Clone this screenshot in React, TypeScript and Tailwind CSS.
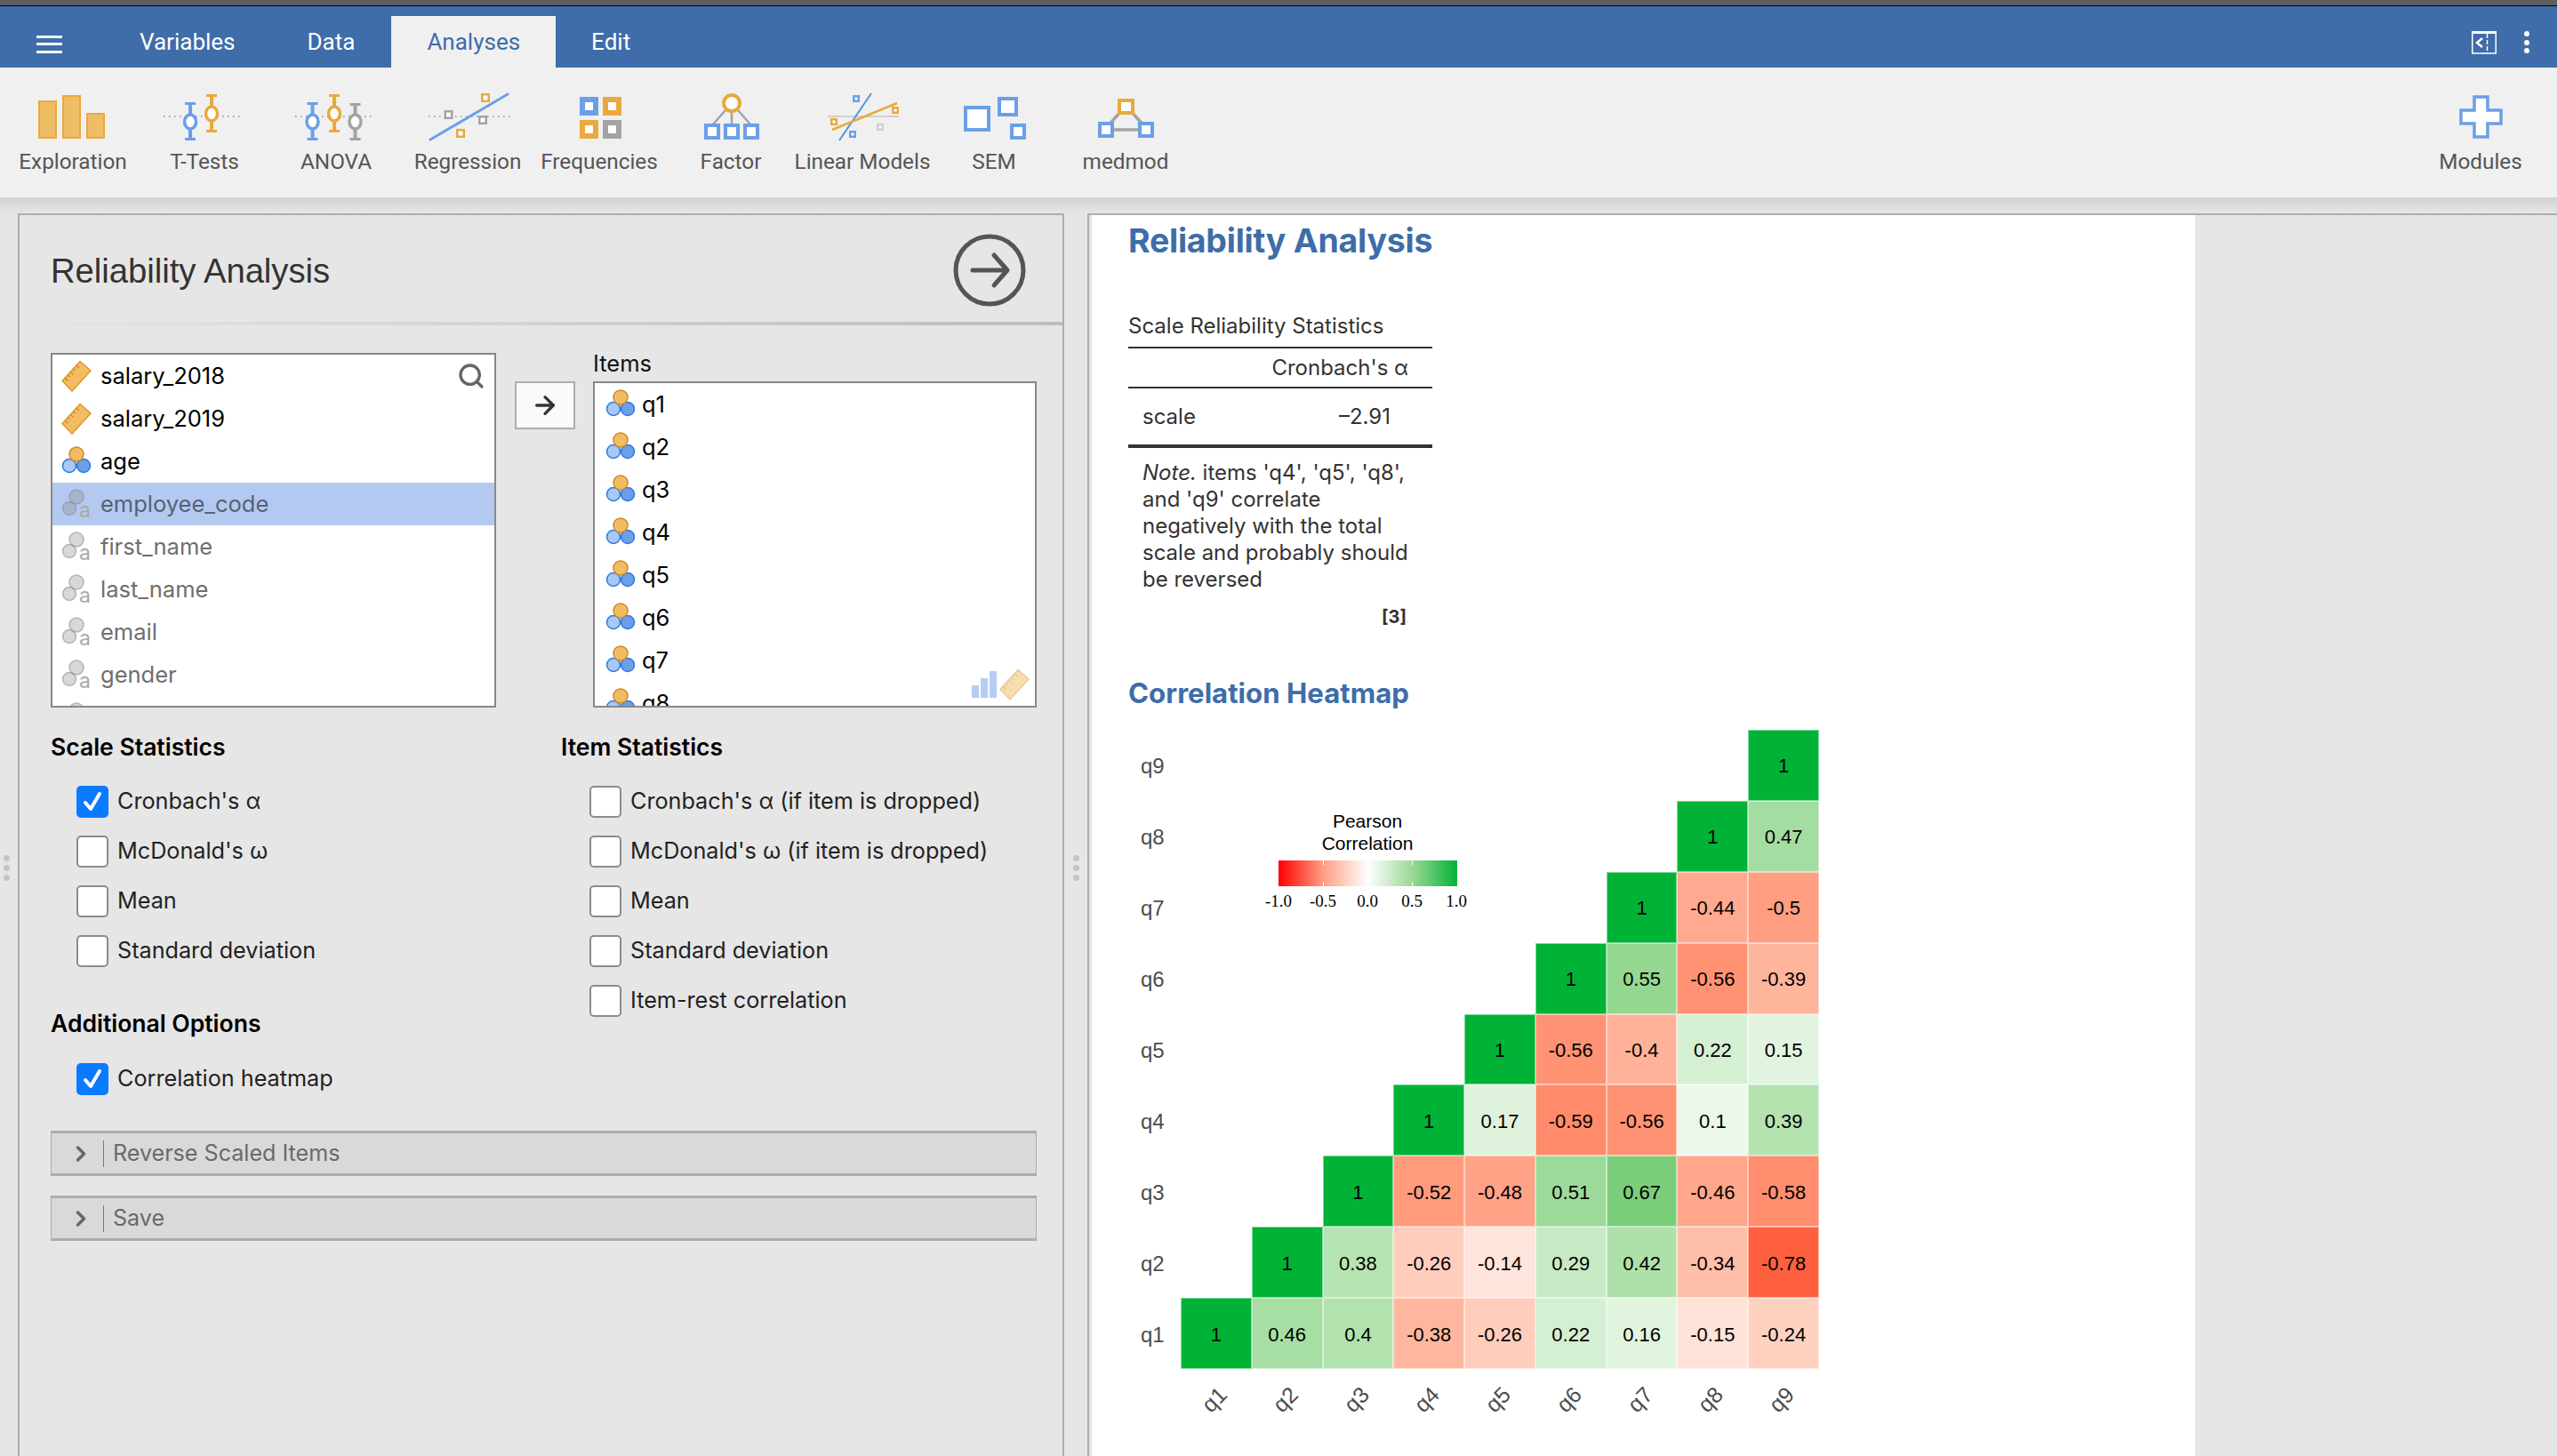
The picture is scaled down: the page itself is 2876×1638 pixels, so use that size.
import React from "react";
import { ArrowRight, ChevronRight, Search } from "lucide-react";

const BLUE = "#6b9fe8";
const ORANGE = "#e9a93f";
const GREY = "#a3a3a3";

// dotted zero line used by the t-test, anova and regression icons
const Dots = ({ x1, x2 }: { x1: number; x2: number }) => (
    <line x1={x1} x2={x2} y1={27} y2={27} stroke="#6b8fc4" strokeWidth={1.5} strokeDasharray="1.5 4.5" />
);

const ErrorBar = ({ x, top, bottom, cy, color }: { x: number; top: number; bottom: number; cy: number; color: string }) => (
    <g stroke={color} fill="none">
        <line x1={x} x2={x} y1={top} y2={bottom} strokeWidth={4} />
        <line x1={x - 6} x2={x + 6} y1={top + 1.5} y2={top + 1.5} strokeWidth={3} />
        <line x1={x - 6} x2={x + 6} y1={bottom - 1.5} y2={bottom - 1.5} strokeWidth={3} />
        <ellipse cx={x} cy={cy} rx={6.5} ry={8} fill="white" strokeWidth={3.5} />
    </g>
);

const Box = ({ x, y, w, h, color, sw = 3 }: { x: number; y: number; w: number; h: number; color: string; sw?: number }) => (
    <rect x={x + sw / 2} y={y + sw / 2} width={w - sw} height={h - sw} fill="white" stroke={color} strokeWidth={sw} />
);

const Pt = ({ cx, cy, color, s = 10 }: { cx: number; cy: number; color: string; s?: number }) => (
    <Box x={cx - s / 2} y={cy - s / 2} w={s} h={s} color={color} sw={2.5} />
);

const ribbonIcons: Record<string, React.ReactNode> = {
    Exploration: (
        <g fill="#eebd66" stroke={ORANGE} strokeWidth={2}>
            <rect x={12} y={10} width={19} height={41} />
            <rect x={39} y={4} width={19} height={47} />
            <rect x={66} y={24} width={19} height={27} />
        </g>
    ),
    "T-Tests": (
        <>
            <Dots x1={4} x2={94} />
            <ErrorBar x={34} top={11} bottom={54} cy={33} color={BLUE} />
            <ErrorBar x={58} top={2} bottom={45} cy={24} color={ORANGE} />
        </>
    ),
    ANOVA: (
        <>
            <Dots x1={4} x2={94} />
            <ErrorBar x={23.5} top={11} bottom={54} cy={33} color={BLUE} />
            <ErrorBar x={48} top={2} bottom={45} cy={24} color={ORANGE} />
            <ErrorBar x={71.5} top={12} bottom={54} cy={33} color={GREY} />
        </>
    ),
    Regression: (
        <>
            <Dots x1={6} x2={98} />
            <line x1={8} y1={53} x2={95} y2={2} stroke={BLUE} strokeWidth={3} strokeLinecap="round" />
            <Pt cx={70} cy={6} color={ORANGE} />
            <Pt cx={28.5} cy={25} color={GREY} />
            <Pt cx={67} cy={31} color={GREY} />
            <Pt cx={42} cy={46} color={ORANGE} />
        </>
    ),
    Frequencies: (
        <>
            <Box x={28} y={5} w={21} h={21} color={BLUE} sw={6} />
            <Box x={54} y={5} w={21} h={21} color={ORANGE} sw={6} />
            <Box x={28} y={31} w={21} h={21} color={ORANGE} sw={6} />
            <Box x={54} y={31} w={21} h={21} color={GREY} sw={6} />
        </>
    ),
    Factor: (
        <>
            <g stroke={GREY} strokeWidth={2.5}>
                <line x1={51} y1={12} x2={29} y2={37} />
                <line x1={51} y1={12} x2={51} y2={37} />
                <line x1={51} y1={12} x2={73} y2={37} />
            </g>
            <ellipse cx={51} cy={12} rx={9} ry={9} fill="white" stroke={ORANGE} strokeWidth={4} />
            <Box x={20} y={35} w={18} h={18} color={BLUE} sw={4} />
            <Box x={42} y={35} w={18} h={18} color={BLUE} sw={4} />
            <Box x={64} y={35} w={18} h={18} color={BLUE} sw={4} />
        </>
    ),
    "Linear Models": (
        <>
            <line x1={11} x2={91} y1={27} y2={27} stroke="#cfcfcf" strokeWidth={2} />
            <line x1={60} y1={1} x2={24} y2={54} stroke="#4f94e0" strokeWidth={2} />
            <line x1={89} y1={12} x2={16} y2={42} stroke={ORANGE} strokeWidth={2.5} />
            <Pt cx={43} cy={7} color={BLUE} s={8} />
            <Pt cx={87} cy={20} color={ORANGE} s={8} />
            <Pt cx={18} cy={33} color={ORANGE} s={8} />
            <Pt cx={70} cy={39} color="#cfcfcf" s={8} />
            <Pt cx={39} cy={47} color={BLUE} s={8} />
        </>
    ),
    SEM: (
        <>
            <Box x={16} y={15} w={30} h={29} color={BLUE} sw={4} />
            <Box x={54} y={5} w={23} h={22} color={BLUE} sw={4} />
            <Box x={68} y={35} w={18} h={18} color={BLUE} sw={4} />
        </>
    ),
    medmod: (
        <>
            <g stroke={GREY} strokeWidth={3.5}>
                <line x1={46} y1={20} x2={28} y2={40} />
                <line x1={55} y1={20} x2={73} y2={40} />
                <line x1={30} y1={42} x2={70} y2={42} />
            </g>
            <Box x={41} y={7} w={19} h={18} color={ORANGE} sw={4} />
            <Box x={19} y={33} w={18} h={18} color={BLUE} sw={4} />
            <Box x={64} y={33} w={18} h={18} color={BLUE} sw={4} />
        </>
    ),
    Modules: (
        <path d="M43.5 6h15v15h15v15h-15v15h-15v-15h-15v-15h15z" fill="white" stroke={BLUE} strokeWidth={3.5} transform="translate(-0.5 -1)" />
    ),
};

const RibbonButton = ({ label }: { label: string }) => (
    <div className="w-[148px] flex flex-col items-center">
        <svg width="100" height="60" viewBox="0 0 100 60" className="mt-7">
            {ribbonIcons[label]}
        </svg>
        <span className="mt-[4px] text-[24.3px] leading-[28px] text-[#555] font-['Roboto',sans-serif] whitespace-nowrap">{label}</span>
    </div>
);

const RulerIcon = ({ faded }: { faded?: boolean }) => (
    <svg width="34" height="36" viewBox="0 0 34 36" className={faded ? "opacity-50 shrink-0" : "shrink-0"}>
        <path d="M21 1.5 33 12 12 35 1 23.5z" fill="#f2bd62" stroke="#e0962a" strokeWidth="1.5" strokeLinejoin="round" />
        <path d="M17 6l3 3M13.5 10l2 2M10.5 13.5l3 3M7.5 17l2 2M4.5 20.5l3 3" stroke="#c98a25" strokeWidth="1.2" />
    </svg>
);

const NominalIcon = () => (
    <svg width="34" height="36" viewBox="0 0 34 36" className="shrink-0">
        <circle cx="9" cy="23" r="7.5" fill="#a9c8f5" stroke="#2f78dc" strokeWidth="1.5" />
        <circle cx="25" cy="23" r="7.5" fill="#6b9fe8" stroke="#2f78dc" strokeWidth="1.5" />
        <circle cx="17" cy="10" r="8" fill="#f2bd62" stroke="#c98a25" strokeWidth="1.5" />
    </svg>
);

const IdIcon = () => (
    <svg width="34" height="36" viewBox="0 0 34 36" className="shrink-0">
        <circle cx="9" cy="23" r="7.5" fill="#8f8f8f" fillOpacity="0.35" stroke="#8f8f8f" strokeOpacity="0.6" strokeWidth="1.5" />
        <circle cx="17" cy="10" r="8" fill="#8f8f8f" fillOpacity="0.35" stroke="#8f8f8f" strokeOpacity="0.6" strokeWidth="1.5" />
        <text x="20" y="33" fontSize="23" fill="#a8a8a8" fontFamily="Inter, sans-serif">a</text>
    </svg>
);

const VarRow = ({ icon, label, muted, selected }: { icon: React.ReactNode; label: string; muted?: boolean; selected?: boolean }) => (
    <div className={`h-12 shrink-0 flex items-center gap-[10px] pl-[10px] text-[25.5px] ${selected ? "bg-[#b3c9ef] text-[#566278]" : muted ? "text-[#6e6e6e]" : "text-black"}`}>
        {icon}
        <span>{label}</span>
    </div>
);

const Check = ({ label, checked }: { label: string; checked?: boolean }) => (
    <div className="h-14 flex items-center gap-[10px]">
        <div className={`w-9 h-9 rounded-[5px] flex items-center justify-center ${checked ? "bg-[#0a7aff]" : "bg-white border-2 border-[#8c8c8c]"}`}>
            {checked && (
                <svg width="28" height="28" viewBox="0 0 28 28" fill="none">
                    <path d="M6 15l6 7L22 5" stroke="white" strokeWidth="4" strokeLinecap="round" strokeLinejoin="round" />
                </svg>
            )}
        </div>
        <span className="text-[25.2px] text-[#222]">{label}</span>
    </div>
);

const Collapsed = ({ label }: { label: string }) => (
    <div className="h-[51px] flex items-center bg-[#d9d9d9] border-y-[3px] border-x border-[#acacac]">
        <ChevronRight className="w-7 h-7 ml-[19px] text-[#666]" strokeWidth={3} />
        <div className="w-px h-[30px] bg-[#777] ml-[11px]" />
        <span className="ml-[10px] text-[25.1px] text-[#6a6a6a]">{label}</span>
    </div>
);

const Handle = () => (
    <div className="flex flex-col gap-[4px] items-center mt-[722px]">
        <div className="w-[7px] h-[7px] rounded-full bg-[#c4c4c4]" />
        <div className="w-[7px] h-[7px] rounded-full bg-[#c4c4c4]" />
        <div className="w-[7px] h-[7px] rounded-full bg-[#c4c4c4]" />
    </div>
);

// ggplot style gradient2: interpolate in Lab between white and the end colour
const toLab = ([r, g, b]: number[]) => {
    const f = (c: number) => {
        const v = c / 255;
        return v > 0.04045 ? Math.pow((v + 0.055) / 1.055, 2.4) : v / 12.92;
    };
    const [lr, lg, lb] = [f(r), f(g), f(b)];
    const x = (0.4124 * lr + 0.3576 * lg + 0.1805 * lb) / 0.95047;
    const y = 0.2126 * lr + 0.7152 * lg + 0.0722 * lb;
    const z = (0.0193 * lr + 0.1192 * lg + 0.9505 * lb) / 1.08883;
    const h = (t: number) => (t > 0.008856 ? Math.cbrt(t) : 7.787 * t + 16 / 116);
    return [116 * h(y) - 16, 500 * (h(x) - h(y)), 200 * (h(y) - h(z))];
};

const fromLab = ([l, a, b]: number[]) => {
    const fy = (l + 16) / 116;
    const g = (t: number) => (t * t * t > 0.008856 ? t * t * t : (t - 16 / 116) / 7.787);
    const x = 0.95047 * g(fy + a / 500);
    const y = g(fy);
    const z = 1.08883 * g(fy - b / 200);
    const lin = [
        3.2406 * x - 1.5372 * y - 0.4986 * z,
        -0.9689 * x + 1.8758 * y + 0.0415 * z,
        0.0557 * x - 0.204 * y + 1.057 * z,
    ];
    const out = lin.map((c) => {
        const v = c > 0.0031308 ? 1.055 * Math.pow(c, 1 / 2.4) - 0.055 : 12.92 * c;
        return Math.round(Math.min(1, Math.max(0, v)) * 255);
    });
    return `rgb(${out[0]},${out[1]},${out[2]})`;
};

const WHITE = toLab([255, 255, 255]);
const RED = toLab([255, 0, 0]);
const GREEN = toLab([0, 179, 54]);

const heatColor = (v: number) => {
    const end = v < 0 ? RED : GREEN;
    const t = Math.abs(v);
    return fromLab(WHITE.map((w, i) => w + (end[i] - w) * t));
};

// rows from q9 down to q1, null where the triangle is empty
const _ = null;
const heat: (number | null)[][] = [
    [_, _, _, _, _, _, _, _, 1],
    [_, _, _, _, _, _, _, 1, 0.47],
    [_, _, _, _, _, _, 1, -0.44, -0.5],
    [_, _, _, _, _, 1, 0.55, -0.56, -0.39],
    [_, _, _, _, 1, -0.56, -0.4, 0.22, 0.15],
    [_, _, _, 1, 0.17, -0.59, -0.56, 0.1, 0.39],
    [_, _, 1, -0.52, -0.48, 0.51, 0.67, -0.46, -0.58],
    [_, 1, 0.38, -0.26, -0.14, 0.29, 0.42, -0.34, -0.78],
    [1, 0.46, 0.4, -0.38, -0.26, 0.22, 0.16, -0.15, -0.24],
];

const Heatmap = () => (
    <div className="relative font-['Liberation_Sans',sans-serif]">
        <div className="flex">
            <div className="w-[59px] h-[719px] flex flex-col">
                {heat.map((_row, i) => (
                    <div key={i} className="flex-1 flex items-center pl-[14px] pt-[3px] text-[24px] text-[#4d4d4d]">
                        q{9 - i}
                    </div>
                ))}
            </div>
            <div className="grid grid-cols-9 grid-rows-9 w-[718px] h-[719px]">
                {heat.flat().map((v, i) =>
                    v === null ? (
                        <div key={i} />
                    ) : (
                        <div
                            key={i}
                            className="flex items-center justify-center pt-[2px] text-[22px] text-black border-[0.5px] border-white/50"
                            style={{ backgroundColor: heatColor(v) }}
                        >
                            {v}
                        </div>
                    )
                )}
            </div>
        </div>
        <div className="flex ml-[57px] w-[718px] mt-[16px]">
            {heat.map((_row, i) => (
                <div key={i} className="flex-1 flex justify-center text-[25px] text-[#4d4d4d]">
                    <span className="-rotate-45">q{i + 1}</span>
                </div>
            ))}
        </div>
        {/* legend sits over the empty half of the plot */}
        <div className="absolute left-[144px] top-[90px] w-[250px] flex flex-col items-center text-black">
            <div className="text-[21px] leading-[25px] text-center">
                Pearson
                <br />
                Correlation
            </div>
            <div className="relative w-[201px] h-[29px] mt-[7px] bg-[linear-gradient(to_right,#ff0000,#ff9e81_25%,#ffffff_50%,#9bd896_75%,#00b336)]">
                <div className="absolute left-[50px] top-0 w-px h-[5px] bg-white" />
                <div className="absolute left-[50px] bottom-0 w-px h-[5px] bg-white" />
                <div className="absolute left-[150px] top-0 w-px h-[5px] bg-white" />
                <div className="absolute left-[150px] bottom-0 w-px h-[5px] bg-white" />
            </div>
            <div className="flex w-full mt-[5px] text-[19px] leading-[24px] font-['Liberation_Serif',serif]">
                {["-1.0", "-0.5", "0.0", "0.5", "1.0"].map((t) => (
                    <span key={t} className="flex-1 text-center">{t}</span>
                ))}
            </div>
        </div>
    </div>
);

const App = () => {
    return (
        <div className="w-[2876px] h-[1638px] overflow-hidden flex flex-col bg-[#e6e6e6] font-['Inter',sans-serif]">
            <div className="h-[6px] shrink-0 bg-[#5f5f5f]" />
            <div className="h-px shrink-0 bg-black" />

            {/* title bar */}
            <div className="h-[69px] shrink-0 bg-[#3e6da9] flex items-end text-white font-['Roboto',sans-serif] text-[26px]">
                <div className="w-[117px] h-full flex items-center pl-[41px] pt-4">
                    <div className="w-[29px] flex flex-col gap-[5.5px]">
                        <div className="h-[3px] bg-white" />
                        <div className="h-[3px] bg-white" />
                        <div className="h-[3px] bg-white" />
                    </div>
                </div>
                <div className="h-[58px] px-10 flex items-center">Variables</div>
                <div className="h-[58px] px-[41px] flex items-center">Data</div>
                <div className="h-[58px] px-10 flex items-center bg-[#f0f0f0] text-[#3e6da9]">Analyses</div>
                <div className="h-[58px] px-10 flex items-center">Edit</div>
                <div className="ml-auto h-full flex items-center pt-3">
                    <svg width="28" height="26" viewBox="0 0 28 26" fill="none" stroke="white">
                        <rect x="0.75" y="1" width="26.5" height="24" strokeWidth="1.5" />
                        <rect x="0" y="0" width="28" height="3" fill="white" stroke="none" />
                        <path d="M12 8l-6 5 6 5" strokeWidth="2.5" />
                        <path d="M17.5 3v22" strokeWidth="1.5" strokeDasharray="5 2" />
                    </svg>
                    <div className="ml-[31px] mr-[31px] flex flex-col gap-[3.5px]">
                        <div className="w-[6px] h-[6px] rounded-full bg-white" />
                        <div className="w-[6px] h-[6px] rounded-full bg-white" />
                        <div className="w-[6px] h-[6px] rounded-full bg-white" />
                    </div>
                </div>
            </div>

            {/* ribbon */}
            <div className="h-[146px] shrink-0 bg-[#f0f0f0] flex pl-2 pr-3">
                {["Exploration", "T-Tests", "ANOVA", "Regression", "Frequencies", "Factor", "Linear Models", "SEM", "medmod"].map((l) => (
                    <RibbonButton key={l} label={l} />
                ))}
                <div className="ml-auto">
                    <RibbonButton label="Modules" />
                </div>
            </div>
            <div className="h-[18px] shrink-0 bg-linear-to-b from-[#d2d2d2] to-[#e6e6e6]" />

            <div className="flex-1 flex min-h-0">
                <div className="w-[20px] flex justify-start pl-[4px]">
                    <Handle />
                </div>

                {/* options panel */}
                <div className="w-[1177px] shrink-0 border-t-2 border-x-2 border-[#adadad]">
                    <div className="h-[120px] flex items-center justify-between pl-[35px] pr-[41px]">
                        <h1 className="mt-[5px] text-[38.2px] text-[#333] font-['Liberation_Sans',sans-serif]">Reliability Analysis</h1>
                        <svg width="82" height="82" viewBox="0 0 82 82" fill="none" stroke="#555" strokeLinecap="round" strokeLinejoin="round" className="mt-[4px]">
                            <circle cx="41" cy="41" r="38" strokeWidth="5" />
                            <path d="M22 41h38M46 24l15 17-15 17" strokeWidth="5" />
                        </svg>
                    </div>
                    <div className="h-1 bg-linear-to-r from-[#e6e6e6] to-[#bdbdbd]" />

                    <div className="pl-[35px] pr-[29px] pt-[31px]">
                        <div className="flex items-start">
                            <div className="relative w-[501px] h-[399px] bg-white border-2 border-[#888] overflow-hidden">
                                <VarRow icon={<RulerIcon />} label="salary_2018" />
                                <VarRow icon={<RulerIcon />} label="salary_2019" />
                                <VarRow icon={<NominalIcon />} label="age" />
                                <VarRow icon={<IdIcon />} label="employee_code" selected />
                                <VarRow icon={<IdIcon />} label="first_name" muted />
                                <VarRow icon={<IdIcon />} label="last_name" muted />
                                <VarRow icon={<IdIcon />} label="email" muted />
                                <VarRow icon={<IdIcon />} label="gender" muted />
                                <VarRow icon={<IdIcon />} label="" muted />
                                <Search className="absolute right-[10px] top-[8px] w-[32px] h-[32px] text-[#666]" strokeWidth={2.5} />
                            </div>
                            <div className="w-[68px] h-[54px] mt-[32px] ml-[21px] flex items-center justify-center bg-[#fafafa] border-2 border-[#adadad]">
                                <ArrowRight className="w-8 h-8 text-[#333]" strokeWidth={2.5} />
                            </div>
                            <div className="ml-5">
                                <div className="h-8 text-[25.5px] leading-[24px] text-[#111]">Items</div>
                                <div className="relative w-[499px] h-[367px] bg-white border-2 border-[#888] overflow-hidden">
                                    {["q1", "q2", "q3", "q4", "q5", "q6", "q7", "q8"].map((q) => (
                                        <div key={q} className="h-12 flex items-center gap-[7px] pl-3 text-[25.5px] text-black">
                                            <NominalIcon />
                                            <span>{q}</span>
                                        </div>
                                    ))}
                                    <div className="absolute right-[6px] bottom-[6px] flex items-end gap-[3px]">
                                        <div className="flex items-end gap-[2px] opacity-50 mb-[3px]">
                                            <div className="w-2 h-[14px] bg-[#6b9fe8]" />
                                            <div className="w-2 h-[22px] bg-[#6b9fe8]" />
                                            <div className="w-2 h-[30px] bg-[#6b9fe8]" />
                                        </div>
                                        <RulerIcon faded />
                                    </div>
                                </div>
                            </div>
                        </div>

                        <div className="grid grid-cols-[574px_1fr] mt-[29px]">
                            <div>
                                <h2 className="h-[30px] leading-[30px] text-[26.5px] font-semibold text-black">Scale Statistics</h2>
                                <div className="pl-[29px] mt-[19px]">
                                    <Check label="Cronbach's α" checked />
                                    <Check label="McDonald's ω" />
                                    <Check label="Mean" />
                                    <Check label="Standard deviation" />
                                </div>
                                <h2 className="h-[30px] leading-[30px] text-[26.5px] font-semibold text-black mt-[38px]">Additional Options</h2>
                                <div className="pl-[29px] mt-[20px]">
                                    <Check label="Correlation heatmap" checked />
                                </div>
                            </div>
                            <div>
                                <h2 className="h-[30px] leading-[30px] text-[26.5px] font-semibold text-black">Item Statistics</h2>
                                <div className="pl-[32px] mt-[19px]">
                                    <Check label="Cronbach's α (if item is dropped)" />
                                    <Check label="McDonald's ω (if item is dropped)" />
                                    <Check label="Mean" />
                                    <Check label="Standard deviation" />
                                    <Check label="Item-rest correlation" />
                                </div>
                            </div>
                        </div>

                        <div className="mt-[30px] flex flex-col gap-[22px]">
                            <Collapsed label="Reverse Scaled Items" />
                            <Collapsed label="Save" />
                        </div>
                    </div>
                </div>

                <div className="w-[26px] flex justify-center">
                    <Handle />
                </div>

                {/* results panel */}
                <div className="flex-1 border-t-2 border-l-2 border-[#adadad]">
                    <div className="w-[1244px] h-full bg-white border-l-[3px] border-[#e4e4e4] pl-[41px] text-[#333]">
                        <h1 className="h-[58px] leading-[58px] text-[37.5px] tracking-[-0.25px] font-bold text-[#3e6da9]">Reliability Analysis</h1>
                        <div className="mt-[50px] h-[40px] leading-[34px] text-[24px]">Scale Reliability Statistics</div>
                        <div className="w-[342px] border-t-2 border-[#333] text-[24px]">
                            <div className="h-[45px] border-b-2 border-[#333] flex items-center justify-end pr-[27px]">Cronbach's α</div>
                            <div className="h-[67px] border-b-4 border-[#333] flex items-center justify-between pl-4 pr-[47px]">
                                <span>scale</span>
                                <span>–2.91</span>
                            </div>
                            <p className="pl-4 pr-[20px] pt-[13px] leading-[30px]">
                                <i>Note.</i> items 'q4', 'q5', 'q8', and 'q9' correlate negatively with the total scale and probably should be reversed
                            </p>
                            <div className="text-right pr-[29px] mt-[15px] text-[20px] leading-[24px] font-bold">[3]</div>
                        </div>
                        <h2 className="mt-[54px] h-[40px] leading-[40px] text-[31.2px] font-bold text-[#3e6da9]">Correlation Heatmap</h2>
                        <div className="mt-[21px]">
                            <Heatmap />
                        </div>
                    </div>
                </div>
            </div>
        </div>
    );
};

export default App;
